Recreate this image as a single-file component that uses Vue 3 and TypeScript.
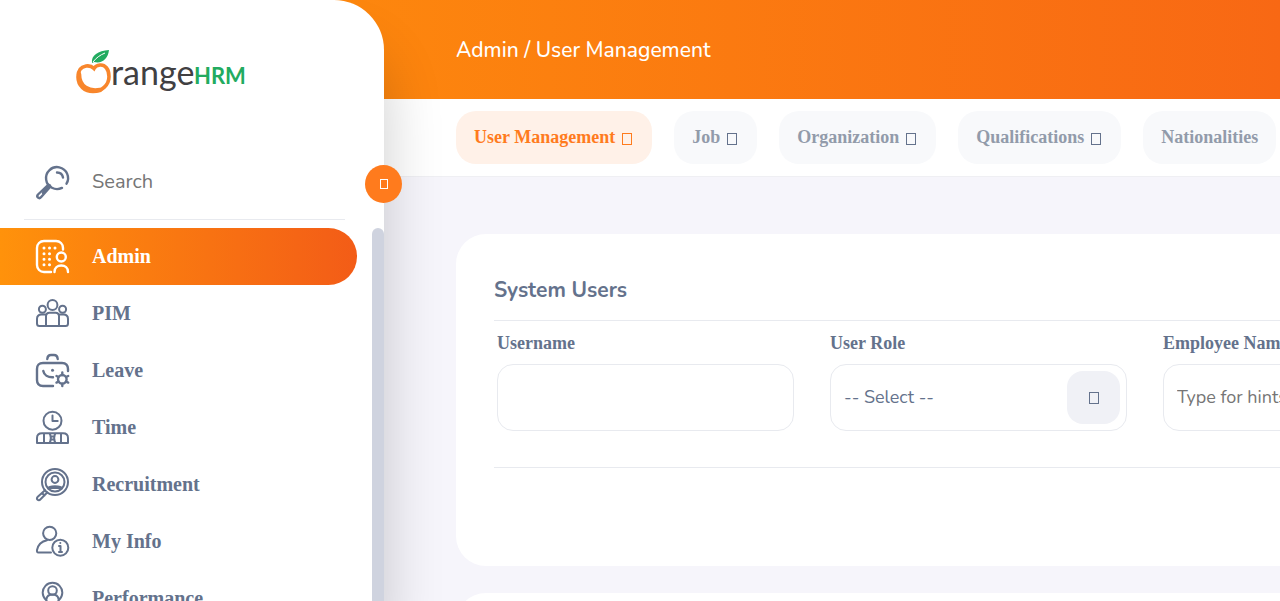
<script setup lang="ts">
import { ref } from 'vue'

interface MenuItem {
  label: string
  icon: string
}

interface Tab {
  label: string
  menu: boolean
}

const menu: MenuItem[] = [
  { label: 'Admin', icon: 'admin' },
  { label: 'PIM', icon: 'pim' },
  { label: 'Leave', icon: 'leave' },
  { label: 'Time', icon: 'time' },
  { label: 'Recruitment', icon: 'recruitment' },
  { label: 'My Info', icon: 'info' },
  { label: 'Performance', icon: 'performance' },
]

const tabs: Tab[] = [
  { label: 'User Management', menu: true },
  { label: 'Job', menu: true },
  { label: 'Organization', menu: true },
  { label: 'Qualifications', menu: true },
  { label: 'Nationalities', menu: false },
]

const activeItem = ref('Admin')
const activeTab = ref('User Management')
const search = ref('')
const username = ref('')
const role = ref('')
const employee = ref('')
</script>

<template>
  <div class="layout">
    <aside class="sidebar">
      <a class="brand" href="#" aria-label="OrangeHRM">
        <svg width="172" height="48" viewBox="0 0 172 48">
          <path d="M11 17C5 18 3 23 3 28C3 37 10 42.500 18 42.500C27 42.500 34 36 34 27.500C34 20 30 15.500 25 16C22 16.300 20 17.500 19 19.500C17 17.500 14 16.500 11 17" fill="none" stroke="#f8862c" stroke-width="3.600" stroke-linecap="round" />
          <path d="M4 25C4 38 14 43 25 41" fill="none" stroke="#f8862c" stroke-width="4.500" stroke-linecap="round" />
          <path d="M17 14C16 6 23 2 34 1C33 10 27 15 19 13Z" fill="#22ab60" />
          <path d="M18 13C21 9 25 6 30 4" fill="none" stroke="#ffffff" stroke-width="1" />
          <text x="36" y="36" class="brand-range">range</text>
          <text x="119" y="35" class="brand-hrm">HRM</text>
        </svg>
      </a>

      <button class="toggle" type="button" aria-label="Collapse menu"><span class="glyph small"></span></button>

      <label class="search">
        <svg class="icon" viewBox="0 0 33 33">
          <path d="M26 21.900A11 11 0 1 1 30.500 17.700" />
          <path d="M21 6.500C24 6.500 26.500 8.500 27 11.500" />
          <path d="M12.500 18.500L2 28.500C0 31 3 33.500 5.200 31L14.500 20.500ZM14 19.500L7 27" />
        </svg>
        <input v-model="search" type="text" placeholder="Search" aria-label="Search">
      </label>

      <nav class="menu" aria-label="Main">
        <ul>
          <li v-for="item in menu" :key="item.label">
            <a href="#" :class="{ active: item.label === activeItem }" @click.prevent="activeItem = item.label">
              <svg class="icon" viewBox="0 0 33 33">
                <g v-if="item.icon === 'admin'">
                  <path d="M27 9.500V8C27 4 24 1 20 1H8C4 1 1 4 1 8V25C1 29 4 32 8 32H15" />
                  <path class="dots" d="M8 8h.01M13.500 8h.01M19 8h.01M8 13.700h.01M13.500 13.700h.01M8 19.200h.01M13.500 19.200h.01M8 24.700h.01M13.500 24.700h.01" />
                  <circle cx="25.300" cy="17" r="4.500" />
                  <path d="M18.500 32C18.500 28 21.500 25.500 25.300 25.500S32 28 32 32" />
                </g>
                <g v-else-if="item.icon === 'pim'" class="thin">
                  <circle cx="16.500" cy="8" r="4.900" />
                  <circle cx="6.400" cy="12.300" r="3.500" />
                  <circle cx="26.600" cy="12.300" r="3.500" />
                  <path d="M10 29V19.500C10 17 11.500 15.800 13.500 15.800H19.500C21.500 15.800 23 17 23 19.500V29M9.500 17.500H5.500C2.500 17.500 1 19.500 1 22V26.500C1 28 2 29 3.500 29H29.500C31 29 32 28 32 26.500V22C32 19.500 30.500 17.500 27.500 17.500H23.500" />
                </g>
                <g v-else-if="item.icon === 'leave'">
                  <path d="M11.300 5C11.500 2.500 13 1 15 1H18C20 1 21.500 2.500 21.700 5M32 17V15C32 11 30 9 26 9H7C3 9 1 11 1 15V26C1 30 3 32 7 32H17" />
                  <path d="M7.300 17C8 21 12 23.500 17 23.300" />
                  <path class="dots" d="M16.500 16.300h.01" />
                  <circle cx="26.300" cy="25.300" r="4.300" />
                  <path d="M26.300 18.500V21M26.300 29.600V32M20.500 22L22.500 23M30 27.500L32.200 28.600M20.500 28.600L22.500 27.500M30 23L32.200 22" />
                </g>
                <g v-else-if="item.icon === 'time'" class="thin">
                  <circle cx="16.500" cy="9.700" r="9" />
                  <path d="M16.500 4.500V10H21.700" />
                  <path d="M1 32V27C1 24 3 22.300 6 22.300H27C30 22.300 32 24 32 27V32ZM8 22.500V32M25 22.500V32M13.700 22.500C15 25 15 29 13.700 32M19.300 22.500C18 25 18 29 19.300 32M14.500 25.500H18.500M14.500 28.500H18.500" />
                </g>
                <g v-else-if="item.icon === 'recruitment'" class="thin">
                  <circle cx="19" cy="14" r="13" />
                  <circle cx="19" cy="14" r="9.500" />
                  <circle cx="19" cy="11.500" r="3.400" />
                  <path d="M12 20C13 17.500 25 17.500 26 20M12.500 20H25.500M9 22.200L1.500 29C0 31 2.500 33.500 4.300 31.500L11.200 24.500M6 25L8.500 27.500" />
                </g>
                <g v-else-if="item.icon === 'info'" class="thin">
                  <circle cx="13.700" cy="8.300" r="6.600" />
                  <path d="M15 27.500H2.500C1 27.500 .8 26.500 1 25C2 20 6 16.200 11 15.200" />
                  <circle cx="24.300" cy="22.700" r="8" />
                  <path d="M23 21H24.500V26.800M23 27H26M24.300 18h.01" />
                </g>
                <g v-else class="thin">
                  <path d="M10 18A9.800 9.800 0 1 1 23 18L16.500 27Z" />
                  <circle cx="16.500" cy="8.500" r="4.300" />
                  <path d="M10.500 17C11 13.500 13 12.500 16.500 12.500S22 13.500 22.500 17" />
                </g>
              </svg>
              <span>{{ item.label }}</span>
            </a>
          </li>
        </ul>
        <div class="track"></div>
      </nav>
    </aside>

    <div class="page">
      <header class="header">
        <h1>Admin / User Management</h1>
      </header>
      <nav class="tabs" aria-label="Section">
        <button
          v-for="tab in tabs"
          :key="tab.label"
          type="button"
          :class="{ active: tab.label === activeTab }"
          @click="activeTab = tab.label"
        >
          {{ tab.label }}<span v-if="tab.menu" class="glyph"></span>
        </button>
      </nav>

      <main class="content">
        <section class="card">
          <h2>System Users</h2>
          <form class="filters" @submit.prevent>
            <div class="field">
              <label for="username">Username</label>
              <div class="box"><input id="username" v-model="username" type="text"></div>
            </div>
            <div class="field">
              <label for="role">User Role</label>
              <div class="box">
                <select id="role" v-model="role">
                  <option value="">-- Select --</option>
                  <option>Admin</option>
                  <option>ESS</option>
                </select>
                <span class="arrow"><span class="glyph"></span></span>
              </div>
            </div>
            <div class="field">
              <label for="employee">Employee Name</label>
              <div class="box"><input id="employee" v-model="employee" type="text" placeholder="Type for hints..."></div>
            </div>
          </form>
        </section>
        <section class="card"></section>
      </main>
    </div>
  </div>
</template>

<style>
body {
  margin: 0;
  overflow: hidden;
}
</style>

<style scoped>
.layout {
  --slate: #64728c;
  --sans: Nunito, Lato, "Open Sans", sans-serif;
  --serif: "Liberation Serif", "Times New Roman", serif;
  display: flex;
  height: 100vh;
  overflow: hidden;
  background: linear-gradient(90deg, #ff920b, #f86814) top / 100% 99px no-repeat #f6f5fb;
  color: var(--slate);
  font-family: var(--serif);
}

.layout * {
  box-sizing: border-box;
}

.sidebar {
  position: relative;
  z-index: 2;
  display: flex;
  flex-direction: column;
  flex: 0 0 384px;
  background: #ffffff;
  border-radius: 0 50px 0 0;
  box-shadow: 0 50px 60px rgba(0, 0, 0, 0.2);
}

.brand {
  display: flex;
  padding: 49px 0 0 75px;
  height: 154px;
}

.brand-range {
  font: 34px Lato, sans-serif;
  fill: #414042;
}

.brand-hrm {
  font: 700 22px Lato, sans-serif;
  fill: #22ab60;
}

.toggle {
  position: absolute;
  top: 165px;
  right: -18px;
  display: flex;
  align-items: center;
  justify-content: center;
  width: 37px;
  height: 38px;
  padding: 0;
  border: 0;
  border-radius: 50%;
  background: #ff7b1d;
  color: #ffffff;
}

.glyph {
  display: inline-block;
  width: 10px;
  height: 12px;
  border: 1px solid currentColor;
}

.glyph.small {
  width: 8px;
  height: 10px;
}

.search {
  display: flex;
  align-items: center;
  gap: 23px;
  height: 66px;
  margin: 0 39px 8px 24px;
  padding: 0 12px 8px;
  border-bottom: 1px solid #e8eaef;
}

.icon {
  flex: none;
  width: 33px;
  height: 33px;
  overflow: visible;
  fill: none;
  stroke: currentColor;
  stroke-width: 2.4;
  stroke-linecap: round;
  stroke-linejoin: round;
}

.thin {
  stroke-width: 2;
}

.dots {
  stroke-width: 3;
}

input,
select {
  min-width: 0;
  width: 100%;
  padding: 0 0 2px;
  border: 0;
  outline: 0;
  appearance: none;
  background: transparent;
  color: var(--slate);
  font: 18px var(--sans);
}

input::placeholder {
  color: #757575;
  opacity: 1;
}

.search input {
  font-size: 20px;
}

.menu {
  display: flex;
  flex: 1;
  min-height: 0;
  overflow: hidden;
}

.menu ul {
  flex: 1;
  margin: 0;
  padding: 0;
  list-style: none;
}

.menu a {
  display: flex;
  align-items: center;
  gap: 23px;
  height: 57px;
  margin-right: 15px;
  padding-left: 36px;
  border-radius: 0 29px 29px 0;
  color: var(--slate);
  font-size: 20px;
  font-weight: 700;
  text-decoration: none;
}

.menu a.active {
  background: linear-gradient(90deg, #ff920b, #f35c17);
  color: #ffffff;
}

.track {
  flex: 0 0 12px;
  border-radius: 6px 6px 0 0;
  background: #cfd3df;
}

.page {
  flex: 1;
  min-width: 0;
}

.header {
  display: flex;
  align-items: center;
  height: 99px;
  padding-left: 72px;
}

h1 {
  margin: 0;
  color: #ffffff;
  font: 500 21px var(--sans);
}

.tabs {
  display: flex;
  gap: 22px;
  height: 78px;
  padding: 12px 72px;
  border-bottom: 1px solid #efeff3;
  background: #ffffff;
}

.tabs button {
  display: flex;
  flex: none;
  align-items: center;
  gap: 7px;
  height: 53px;
  padding: 0 18px;
  border: 0;
  border-radius: 20px;
  background: #f8f9fb;
  color: #929baa;
  font: 700 18px var(--serif);
}

.tabs button.active {
  background: #fff1e8;
  color: #ff7b1d;
}

.tabs .glyph {
  margin: 2px 2px 0 0;
  color: var(--slate);
}

.tabs .active .glyph {
  color: #ff7b1d;
}

.content {
  display: flex;
  flex-direction: column;
  gap: 27px;
  width: max-content;
  min-width: 100%;
  padding: 57px 72px;
}

.card {
  height: 332px;
  padding: 38px;
  border-radius: 30px;
  background: #ffffff;
}

h2 {
  margin: 0;
  padding: 3px 0 15px;
  font: 700 21px/30px var(--sans);
}

.filters {
  display: grid;
  grid-template-columns: repeat(3, minmax(297px, 1fr));
  gap: 36px;
  padding: 12px 3px 36px;
  border: solid #e8eaef;
  border-width: 1px 0;
}

.field label {
  display: block;
  margin-bottom: 11px;
  font-size: 18px;
  font-weight: 700;
  line-height: 20px;
}

.box {
  display: flex;
  align-items: center;
  height: 67px;
  padding: 0 6px 0 13px;
  border: 1px solid #e8eaef;
  border-radius: 16px;
}

.arrow {
  display: flex;
  flex: none;
  align-items: center;
  justify-content: center;
  width: 53px;
  height: 53px;
  border-radius: 16px;
  background: #f0f1f6;
  pointer-events: none;
}
</style>
